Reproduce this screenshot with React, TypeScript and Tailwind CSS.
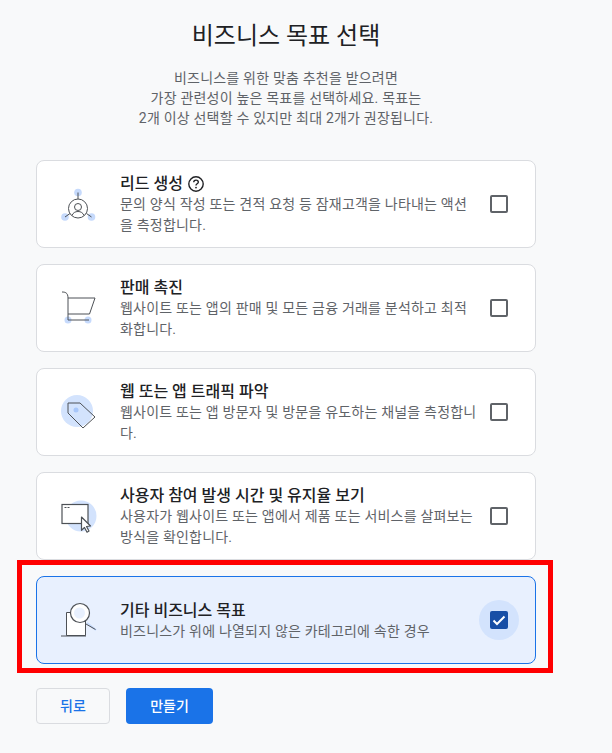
import { ReactNode } from 'react';

const blue = '#c6dafc';
const ink = '#4d5156';

function LeadIcon() {
  return (
    <svg width="48" height="48" viewBox="0 0 48 48" fill="none">
      <circle cx="24" cy="12.500" r="3.800" fill={blue} />
      <circle cx="11" cy="37" r="3.800" fill={blue} />
      <circle cx="37.500" cy="37" r="3.800" fill={blue} />
      <g stroke={ink} strokeWidth="1">
        <circle cx="24" cy="28.500" r="9.500" />
        <circle cx="24" cy="27" r="3.500" />
        <path d="M18 35.500c1-2.700 3.200-4 6-4s5 1.300 6 4" />
        <path d="M24 12.500V19M11 37l5-3.500M37.500 37l-5-3.500" />
      </g>
    </svg>
  );
}

function CartIcon() {
  return (
    <svg width="48" height="48" viewBox="0 0 48 48" fill="none">
      <circle cx="14" cy="36" r="3.500" fill={blue} />
      <circle cx="34" cy="36" r="3.500" fill={blue} />
      <g stroke={ink} strokeWidth="1">
        <path d="M8 8c3 0 6 .5 6 6v22h21" />
        <path d="M14 14h27l-5.500 16H14" />
      </g>
    </svg>
  );
}

function TagIcon() {
  return (
    <svg width="48" height="48" viewBox="0 0 48 48" fill="none">
      <circle cx="23" cy="23" r="16" fill="#d3e3fd" />
      <path d="M14 15h12l15 14-12 11-15-15z" stroke={ink} strokeWidth="1" strokeLinejoin="round" />
      <circle cx="22" cy="22" r="2.500" fill="#a8c7fa" />
    </svg>
  );
}

function WindowIcon() {
  return (
    <svg width="48" height="48" viewBox="0 0 48 48" fill="none">
      <circle cx="27" cy="24" r="15.500" fill="#d3e3fd" />
      <rect x="8" y="12.500" width="26" height="19" fill="#fff" stroke={ink} strokeWidth="1.200" />
      <path d="M10.500 15.500h2M13.500 15.500h2" stroke={ink} />
      <path d="M27.500 25l9 9-4 .5 2.500 4.500-2 1.200-2.500-4.700-3 2.800z" fill="#fff" stroke={ink} strokeWidth="1.200" strokeLinejoin="round" />
    </svg>
  );
}

function SearchIcon() {
  return (
    <svg width="48" height="48" viewBox="0 0 48 48" fill="none">
      <path d="M12.500 16.500h19v23h-19z" fill="#fff" stroke={ink} strokeWidth="1" />
      <path d="M7 40h25" stroke={ink} strokeWidth="1" />
      <path d="M33 27l9 7" stroke="#c6dafc" strokeWidth="2" />
      <path d="M32 28l9.500 5.500" stroke={ink} strokeWidth="1" />
      <circle cx="26" cy="17" r="9.500" fill="#fff" stroke={ink} strokeWidth="1.200" />
      <circle cx="25.500" cy="17" r="5.500" fill="#e8f0fe" />
    </svg>
  );
}

type Goal = {
  title: ReactNode;
  desc: string;
  icon: ReactNode;
  selected?: boolean;
};

const goals: Goal[] = [
  {
    title: (
      <span className="flex items-center gap-[5px]">
        리드 생성
        <svg width="16" height="16" viewBox="0 0 16 16" fill="none">
          <circle cx="8" cy="8" r="7.200" stroke="#202124" strokeWidth="1.400" />
          <path d="M5.700 6.300c0-1.300 1.100-2.200 2.300-2.200s2.300.9 2.300 2.100c0 1.600-2.300 1.600-2.300 3.300" stroke="#202124" strokeWidth="1.400" />
          <circle cx="8" cy="11.600" r=".9" fill="#202124" />
        </svg>
      </span>
    ),
    desc: '문의 양식 작성 또는 견적 요청 등 잠재고객을 나타내는 액션을 측정합니다.',
    icon: <LeadIcon />,
  },
  {
    title: '판매 촉진',
    desc: '웹사이트 또는 앱의 판매 및 모든 금융 거래를 분석하고 최적화합니다.',
    icon: <CartIcon />,
  },
  {
    title: '웹 또는 앱 트래픽 파악',
    desc: '웹사이트 또는 앱 방문자 및 방문을 유도하는 채널을 측정합니다.',
    icon: <TagIcon />,
  },
  {
    title: '사용자 참여 발생 시간 및 유지율 보기',
    desc: '사용자가 웹사이트 또는 앱에서 제품 또는 서비스를 살펴보는 방식을 확인합니다.',
    icon: <WindowIcon />,
  },
  {
    title: '기타 비즈니스 목표',
    desc: '비즈니스가 위에 나열되지 않은 카테고리에 속한 경우',
    icon: <SearchIcon />,
    selected: true,
  },
];

function GoalCard({ goal }: { goal: Goal }) {
  return (
    <div
      className={`flex h-[88px] items-center rounded-lg border pl-[17px] pr-4 ${
        goal.selected ? 'border-[#1a73e8] bg-[#e8f0fe]' : 'border-[#dadce0] bg-white'
      }`}
    >
      <div className="mr-[18px] shrink-0">{goal.icon}</div>
      <div className="w-[359px] shrink-0 pt-0.5">
        <div className="text-[16px] leading-5 font-medium text-[#202124]">{goal.title}</div>
        <p className="text-[14px] leading-[21px] tracking-[0.2px] text-[#5f6368]">{goal.desc}</p>
      </div>
      <div
        className={`flex h-10 w-10 shrink-0 items-center justify-center rounded-full ${
          goal.selected ? 'bg-[#d3e3fd]' : ''
        }`}
      >
        {goal.selected ? (
          <div className="flex h-[18px] w-[18px] items-center justify-center rounded-[2px] bg-[#174ea6]">
            <svg width="14" height="14" viewBox="0 0 14 14" fill="none">
              <path d="M1.500 7.500l3.500 3.500 7.500-7.500" stroke="#fff" strokeWidth="2" />
            </svg>
          </div>
        ) : (
          <div className="h-[18px] w-[18px] rounded-[2px] border-2 border-[#5f6368]" />
        )}
      </div>
    </div>
  );
}

export default function App() {
  return (
    <div
      className="relative h-[753px] w-[612px] overflow-hidden bg-[#f8f9fa] pl-9"
      style={{ fontFamily: 'Roboto, "Noto Sans CJK KR", sans-serif' }}
    >
      <div className="w-[500px]">
        <h1 className="pt-5 text-center text-[24px] leading-8 font-normal text-[#202124]">
          비즈니스 목표 선택
        </h1>
        <p className="mt-4 text-center text-[14px] leading-5 tracking-[0.2px] text-[#5f6368]">
          비즈니스를 위한 맞춤 추천을 받으려면
          <br />
          가장 관련성이 높은 목표를 선택하세요. 목표는
          <br />
          2개 이상 선택할 수 있지만 최대 2개가 권장됩니다.
        </p>
        <div className="mt-8 flex flex-col gap-4">
          {goals.map((goal, i) => (
            <GoalCard key={i} goal={goal} />
          ))}
        </div>
        <div className="mt-6 flex gap-4">
          <button className="h-9 w-[74px] rounded border border-[#dadce0] text-[14px] font-medium text-[#1a73e8]">
            뒤로
          </button>
          <button className="h-9 w-[87px] rounded bg-[#1a73e8] text-[14px] font-medium text-white">
            만들기
          </button>
        </div>
      </div>
      <div className="absolute top-[560px] left-[17px] h-[113px] w-[536px] border-[5px] border-[#ff0000]" />
    </div>
  );
}
